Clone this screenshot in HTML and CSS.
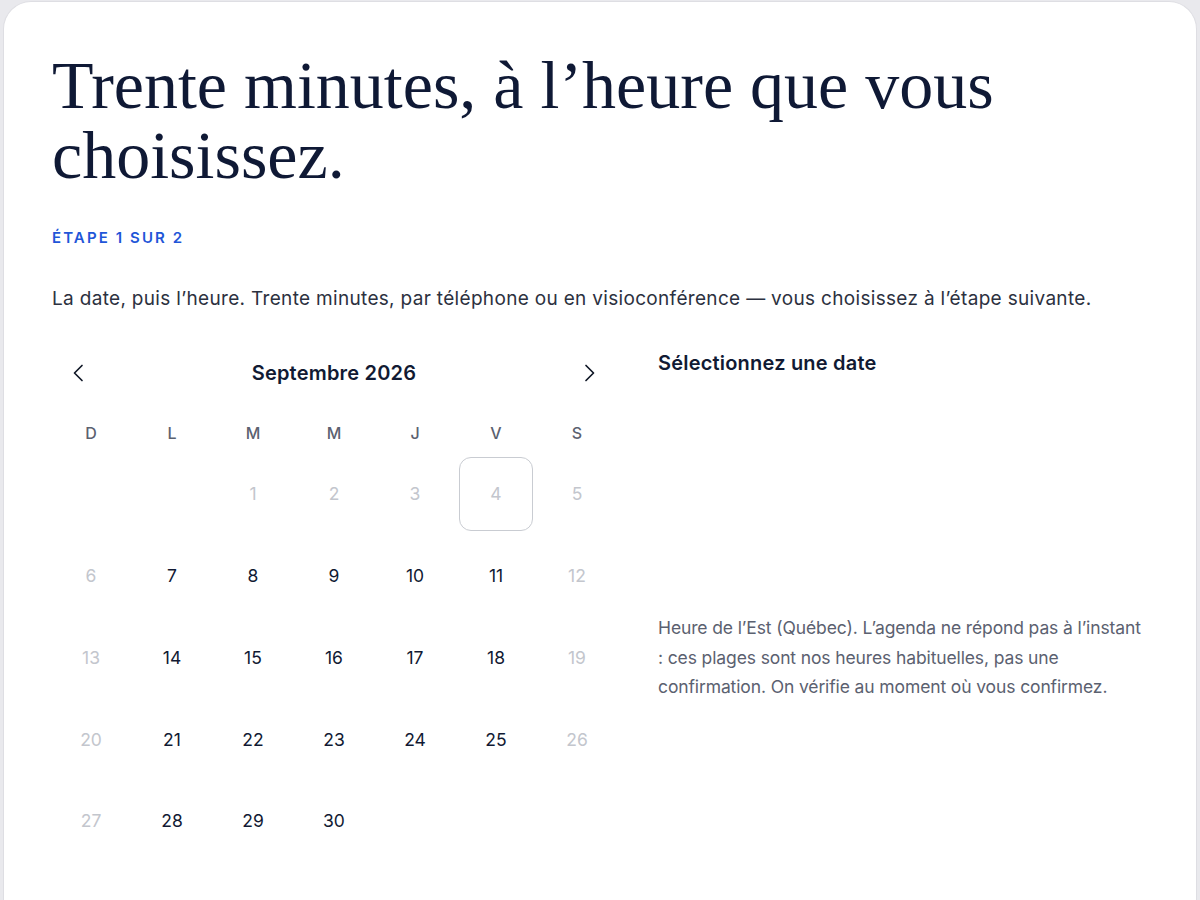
FILE: index.html
```html
<!DOCTYPE html>
<html lang="fr">
<head>
<meta charset="utf-8">
<title>Réserver</title>
<link rel="stylesheet" href="styles.css">
</head>
<body>
<main class="card">
  <h1 class="title">Trente minutes, à l’heure que vous choisissez.</h1>
  <p class="step">ÉTAPE 1 SUR 2</p>
  <p class="lead">La date, puis l’heure. Trente minutes, par téléphone ou en visioconférence — vous choisissez à l’étape suivante.</p>
  <section class="booking">
    <div class="calendar">
      <div class="cal-head">
        <button class="nav" aria-label="Mois précédent">
          <svg width="24" height="24" viewBox="0 0 24 24"><path d="M15 4.5 7.5 12l7.5 7.5" fill="none" stroke="#111827" stroke-width="1.7" stroke-linecap="round" stroke-linejoin="round"/></svg>
        </button>
        <div class="month">Septembre 2026</div>
        <button class="nav" aria-label="Mois suivant">
          <svg width="24" height="24" viewBox="0 0 24 24"><path d="M9 4.5 16.5 12 9 19.5" fill="none" stroke="#111827" stroke-width="1.7" stroke-linecap="round" stroke-linejoin="round"/></svg>
        </button>
      </div>
      <div class="grid">
        <div class="wd">D</div><div class="wd">L</div><div class="wd">M</div><div class="wd">M</div><div class="wd">J</div><div class="wd">V</div><div class="wd">S</div>
        <div class="day empty"></div><div class="day empty"></div>
        <div class="day off">1</div><div class="day off">2</div><div class="day off">3</div><div class="day off today">4</div><div class="day off">5</div>
        <div class="day off">6</div><div class="day">7</div><div class="day">8</div><div class="day">9</div><div class="day">10</div><div class="day">11</div><div class="day off">12</div>
        <div class="day off">13</div><div class="day">14</div><div class="day">15</div><div class="day">16</div><div class="day">17</div><div class="day">18</div><div class="day off">19</div>
        <div class="day off">20</div><div class="day">21</div><div class="day">22</div><div class="day">23</div><div class="day">24</div><div class="day">25</div><div class="day off">26</div>
        <div class="day off">27</div><div class="day">28</div><div class="day">29</div><div class="day">30</div>
      </div>
    </div>
    <aside class="side">
      <h2 class="side-title">Sélectionnez une date</h2>
      <p class="note">Heure de l’Est (Québec). L’agenda ne répond pas à l’instant : ces plages sont nos heures habituelles, pas une confirmation. On vérifie au moment où vous confirmez.</p>
    </aside>
  </section>
</main>
</body>
</html>
```
FILE: styles.css
```css
html, body {
  margin: 0;
  background: #e9e9ed;
}
body {
  padding: 1px 3px 0 3px;
  font-family: Inter, "Noto Sans", sans-serif;
  color: #111a33;
}
.card {
  background: #fff;
  border: 1px solid #dedee3;
  border-bottom: none;
  border-radius: 28px 28px 0 0;
  min-height: 899px;
  box-sizing: border-box;
  padding: 48px 49px 0 48px;
}
.title {
  font-family: "Liberation Serif", serif;
  font-weight: 400;
  font-size: 68px;
  line-height: 70px;
  letter-spacing: 0;
  color: #0f1935;
  margin: 0;
  max-width: 980px;
}
.step {
  margin: 39px 0 0;
  font-size: 15px;
  font-weight: 600;
  letter-spacing: 2.1px;
  color: #1f56d8;
  line-height: 18px;
}
.lead {
  margin: 39px 0 0;
  font-size: 19px;
  line-height: 26px;
  letter-spacing: 0.32px;
  color: #2c3140;
}
.booking {
  display: flex;
  gap: 44px;
  margin-top: 39px;
}
.calendar {
  width: 560px;
  flex: none;
  margin-left: 2px;
}
.cal-head {
  display: flex;
  align-items: center;
  justify-content: space-between;
  height: 44px;
}
.nav {
  width: 50px;
  height: 44px;
  border: none;
  background: none;
  padding: 0;
  display: flex;
  align-items: center;
  justify-content: center;
  cursor: pointer;
}
.month {
  font-size: 20px;
  font-weight: 600;
  letter-spacing: 0.2px;
  color: #111a33;
}
.grid {
  display: grid;
  grid-template-columns: repeat(7, 74px);
  grid-auto-rows: 74px;
  grid-template-rows: 32px;
  column-gap: 7px;
  row-gap: 7.75px;
  margin-top: 22px;
}
.wd {
  display: flex;
  align-items: center;
  justify-content: center;
  font-size: 16px;
  font-weight: 500;
  color: #5b6170;
}
.day {
  display: flex;
  align-items: center;
  justify-content: center;
  font-size: 17.5px;
  color: #111a33;
  border-radius: 12px;
  box-sizing: border-box;
}
.day.off {
  color: #c3c6cd;
}
.day.today {
  border: 1px solid #c9ccd2;
}
.side {
  flex: 1;
  max-width: 486px;
}
.side-title {
  margin: 0;
  font-size: 20px;
  font-weight: 600;
  line-height: 24px;
  letter-spacing: 0.2px;
  color: #111a33;
}
.note {
  margin: 238px 0 0;
  font-size: 17.5px;
  line-height: 29.5px;
  letter-spacing: -0.12px;
  color: #5b6170;
}
```
